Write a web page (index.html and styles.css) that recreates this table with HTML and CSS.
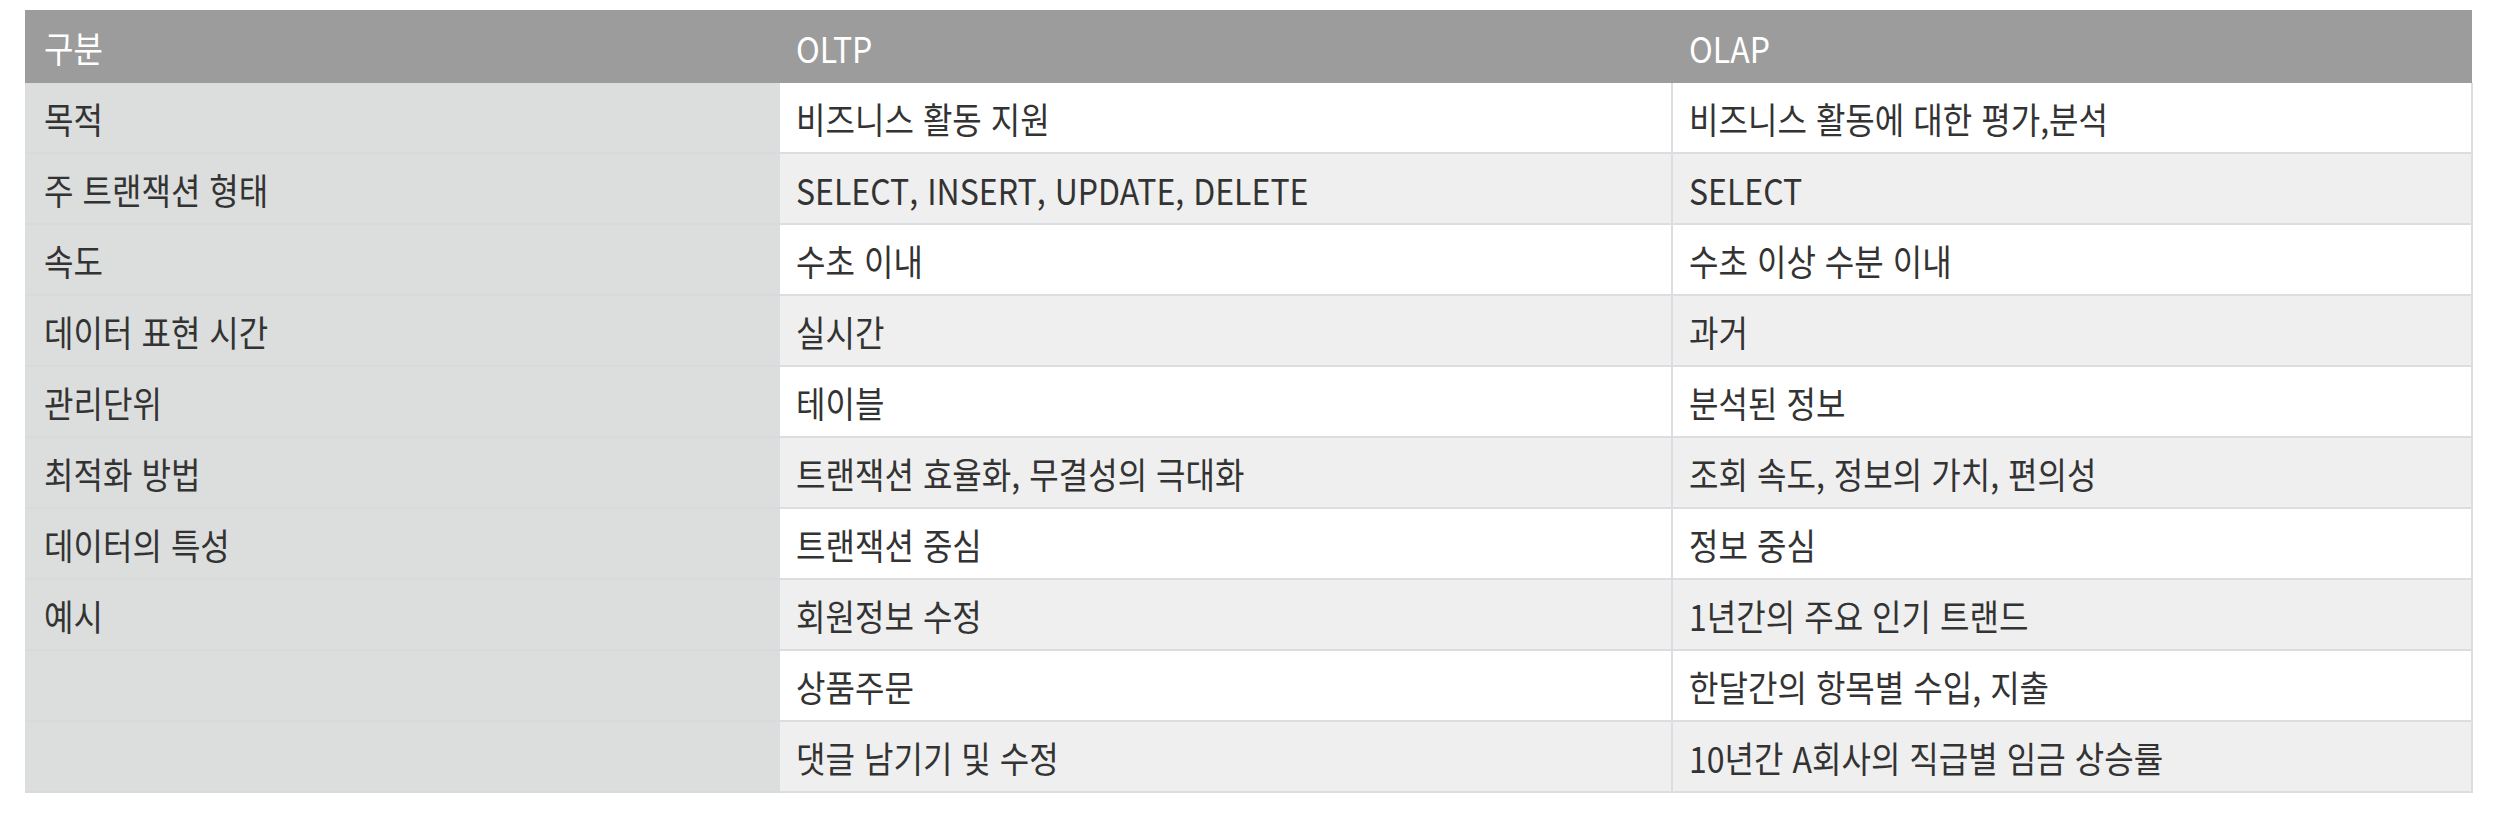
FILE: index.html
```html
<!DOCTYPE html>
<html lang="ko">
<head>
<meta charset="utf-8">
<title>OLTP vs OLAP</title>
<link rel="stylesheet" href="styles.css">
</head>
<body>
<div class="wrap">
  <table class="compare">
    <colgroup>
      <col class="c-label">
      <col class="c-oltp">
      <col class="c-olap">
    </colgroup>
    <thead>
      <tr>
        <th><span class="t">구분</span></th>
        <th><span class="t">OLTP</span></th>
        <th><span class="t">OLAP</span></th>
      </tr>
    </thead>
    <tbody>
      <tr><td class="label"><span class="t">목적</span></td><td><span class="t">비즈니스 활동 지원</span></td><td><span class="t">비즈니스 활동에 대한 평가,분석</span></td></tr>
      <tr><td class="label"><span class="t">주 트랜잭션 형태</span></td><td><span class="t">SELECT, INSERT, UPDATE, DELETE</span></td><td><span class="t">SELECT</span></td></tr>
      <tr><td class="label"><span class="t">속도</span></td><td><span class="t">수초 이내</span></td><td><span class="t">수초 이상 수분 이내</span></td></tr>
      <tr><td class="label"><span class="t">데이터 표현 시간</span></td><td><span class="t">실시간</span></td><td><span class="t">과거</span></td></tr>
      <tr><td class="label"><span class="t">관리단위</span></td><td><span class="t">테이블</span></td><td><span class="t">분석된 정보</span></td></tr>
      <tr><td class="label"><span class="t">최적화 방법</span></td><td><span class="t">트랜잭션 효율화, 무결성의 극대화</span></td><td><span class="t">조회 속도, 정보의 가치, 편의성</span></td></tr>
      <tr><td class="label"><span class="t">데이터의 특성</span></td><td><span class="t">트랜잭션 중심</span></td><td><span class="t">정보 중심</span></td></tr>
      <tr><td class="label"><span class="t">예시</span></td><td><span class="t">회원정보 수정</span></td><td><span class="t">1년간의 주요 인기 트랜드</span></td></tr>
      <tr><td class="label"></td><td><span class="t">상품주문</span></td><td><span class="t">한달간의 항목별 수입, 지출</span></td></tr>
      <tr><td class="label"></td><td><span class="t">댓글 남기기 및 수정</span></td><td><span class="t">10년간 A회사의 직급별 임금 상승률</span></td></tr>
    </tbody>
  </table>
</div>
</body>
</html>
```

FILE: styles.css
```css
html, body {
  margin: 0;
  padding: 0;
  background: #ffffff;
}

.wrap {
  padding: 10px 0 0 25px;
}

.compare {
  width: 2447px;
  border-collapse: collapse;
  table-layout: fixed;
  font-family: "Noto Sans CJK KR", "Noto Sans", sans-serif;
  font-size: 36px;
  font-feature-settings: "palt";
  color: #333333;
}

.c-label { width: 754px; }
.c-oltp { width: 893px; }
.c-olap { width: 800px; }

.t {
  display: inline-block;
  transform: scaleX(0.89);
  transform-origin: left center;
  white-space: nowrap;
}

.compare th {
  height: 73px;
  padding: 0 17px;
  background: #9c9c9c;
  color: #ffffff;
  font-weight: 400;
  text-align: left;
  vertical-align: middle;
  border: 0;
}

.compare td {
  height: 69px;
  padding: 0 16px;
  text-align: left;
  vertical-align: middle;
  border: 2px solid #dcdde0;
  white-space: nowrap;
}

.compare th:first-child,
.compare td.label {
  padding-left: 19px;
}

.compare td.label {
  background: #dcdddd;
  border-left: 0;
  border-right: 0;
  border-color: #d9dadd;
}

.compare tbody tr:first-child td {
  border-top: 0;
}

.compare tbody tr:nth-child(odd) td:not(.label) {
  background: #ffffff;
}

.compare tbody tr:nth-child(even) td:not(.label) {
  background: #efefef;
}
```
